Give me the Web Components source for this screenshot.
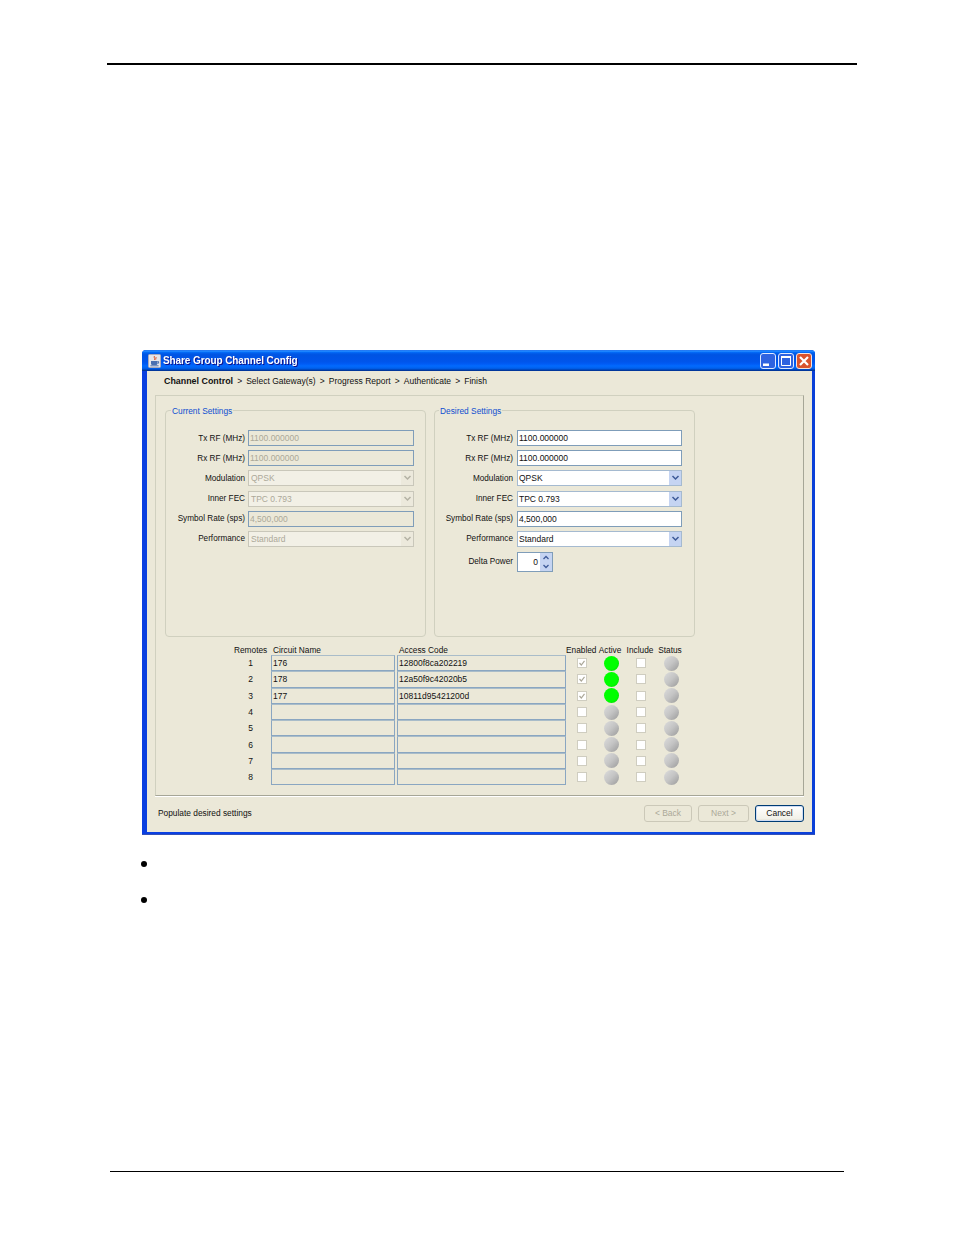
<!DOCTYPE html>
<html>
<head>
<meta charset="utf-8">
<title>Share Group Channel Config</title>
<style>
  html, body { margin: 0; padding: 0; background: #fff; }
</style>
</head>
<body>
<doc-page>
  <xp-window title="Share Group Channel Config">
    <wizard-steps></wizard-steps>
    <div slot="panel" style="display:contents">
      <settings-box legend="Current Settings" disabled style="--label-w:79px;--label-gap:3px;--field-w:166px;--legend-left:5px;"></settings-box>
      <settings-box legend="Desired Settings" delta style="--label-w:78px;--label-gap:4px;--field-w:165px;--legend-left:4px;margin-left:8px;"></settings-box>
      <remote-table></remote-table>
    </div>
  </xp-window>
</doc-page>

<script>
const UI_FONT = `"Liberation Sans", Arial, sans-serif`;

class DocPage extends HTMLElement {
  constructor() {
    super();
    this.shadow = this.attachShadow({ mode: 'open' });
  }
  connectedCallback() {
    this.shadow.innerHTML = /* html */`
    <style>
      :host { display: flex; flex-direction: column; width: 954px; height: 1235px; box-sizing: border-box; padding-top: 63px; }
      .head-rule { height: 2px; background: #000; margin-left: 107px; width: 750px; }
      .shot { margin: 285px 0 0 142px; }
      ul { list-style: none; margin: 25.5px 0 0 141px; padding: 0; display: flex; flex-direction: column; gap: 30px; }
      li { width: 6px; height: 6px; border-radius: 50%; background: #000; }
      .foot-rule { height: 1px; background: #000; margin: auto 0 63px 110px; width: 734px; }
    </style>
    <div class="head-rule"></div>
    <div class="shot"><slot></slot></div>
    <ul><li></li><li></li></ul>
    <div class="foot-rule"></div>`;
  }
}

class XpWindow extends HTMLElement {
  constructor() {
    super();
    this.shadow = this.attachShadow({ mode: 'open' });
  }
  connectedCallback() {
    this.shadow.innerHTML = /* html */`
    <style>
      /* the source screenshot is scaled down, so the text is a little soft */
      :host { display: flex; flex-direction: column; width: 673px; height: 485px; box-sizing: border-box;
        font: 8.5px ${UI_FONT}; color: #111; background: linear-gradient(90deg, #0a3fe0, #0a4ff0 60%, #0a3fd8); border-bottom: 1px solid #3350b8;
        border-radius: 4px 4px 0 0; overflow: hidden; filter: blur(.25px); }
      .title { flex: 0 0 21px; box-sizing: border-box; display: flex; align-items: center; padding: 0 3px 0 6px; color: #fff; font-weight: bold; font-size: 10px; letter-spacing: -.1px;
        text-shadow: 1px 1px 0 #0f1089;
        background: linear-gradient(#0058e6, #3a93ff 4%, #288eff 6%, #127dff 8%, #036ffc 10%, #0262ee 14%, #0057e5 20%, #0054e3 24%, #0055eb 56%, #005bf5 66%, #026afe 76%, #0062ef 86%, #0052d6 92%, #0040ab 94%, #003092 100%); }
      .title svg.app { margin-right: 2px; flex: none; }
      .title span { flex: 1; padding-bottom: 1px; }
      .ctl { display: flex; gap: 2px; }
      .ctl svg { display: block; }
      .body { flex: 1; display: flex; flex-direction: column; background: #ebe8d8; margin: 0 3px 2px 5px; min-height: 0; }
      .crumbs { flex: 0 0 24px; box-sizing: border-box; display: flex; align-items: center; padding: 0 0 5px 17px; }
      .panel { height: 401px; box-sizing: border-box; margin: 0 8px; border: 1px solid #d0d0bf; border-right-color: #a6a697; border-bottom-color: #a6a697;
        box-shadow: 0 1px 0 #fff; padding: 14px 0 0 9px; display: flex; flex-wrap: wrap; align-content: flex-start; }
      .status { flex: 1; display: flex; align-items: center; justify-content: space-between; padding: 1px 8px 3px 11px; }
      .status span { font-size: 8.35px; }
      .btns { display: flex; gap: 6px; }
      button { width: 49px; height: 17px; padding: 0; box-sizing: border-box; font: inherit; border-radius: 3px; color: #111; }
      button[disabled] { color: #aca899; border: 1px solid #cbc8b8; background: #ebe8d8; }
      button.main { background: linear-gradient(#fff, #f2f1e8 85%, #dcd8c8); border: 1px solid #003c74; box-shadow: inset 0 0 0 1px #cfdcf4; }
    </style>
    <div class="title">
      <svg class="app" width="13" height="14" viewBox="0 0 13 14">
        <rect x=".5" y=".5" width="12" height="13" rx="1" fill="#e6e6ea" stroke="#aab"/>
        <path d="M6.5 2c-1.5 1.6 1.4 2.2 0 4M8.4 3c-1 1-.2 1.6-.7 2.6" fill="none" stroke="#e0552a" stroke-width="1"/>
        <path d="M3 7h6.4v2.4c0 1-.8 1.6-1.6 1.6H4.6C3.8 11 3 10.4 3 9.4z" fill="#4a6fb0"/>
        <path d="M9.4 7.6h1.2v1.6H9.4M2.4 11.8h8.2" fill="none" stroke="#4a6fb0"/>
      </svg>
      <span>${this.getAttribute('title')}</span>
      <div class="ctl">
        <svg width="16" height="16" viewBox="0 0 16 16">
          <rect x=".5" y=".5" width="15" height="15" rx="2.5" fill="#2f63e0" stroke="#dfe9ff"/>
          <rect x="3" y="10.5" width="6" height="2.5" fill="#fff"/>
        </svg>
        <svg width="16" height="16" viewBox="0 0 16 16">
          <rect x=".5" y=".5" width="15" height="15" rx="2.5" fill="#2f63e0" stroke="#dfe9ff"/>
          <path d="M3.5 3.5h9v9h-9z" fill="none" stroke="#fff"/><path d="M3 4h10" stroke="#fff" stroke-width="2"/>
        </svg>
        <svg width="16" height="16" viewBox="0 0 16 16">
          <rect x=".5" y=".5" width="15" height="15" rx="2.5" fill="#d9532e" stroke="#f4e3dc"/>
          <path d="M4 4l8 8M12 4l-8 8" stroke="#fff" stroke-width="2.2"/>
        </svg>
      </div>
    </div>
    <div class="body">
      <div class="crumbs"><slot></slot></div>
      <div class="panel"><slot name="panel"></slot></div>
      <div class="status">
        <span>Populate desired settings</span>
        <div class="btns">
          <button disabled style="width:48px">&lt; Back</button>
          <button disabled style="width:51px">Next &gt;</button>
          <button class="main">Cancel</button>
        </div>
      </div>
    </div>`;
  }
}

class WizardSteps extends HTMLElement {
  constructor() {
    super();
    this.shadow = this.attachShadow({ mode: 'open' });
  }
  connectedCallback() {
    const steps = ['Channel Control', 'Select Gateway(s)', 'Progress Report', 'Authenticate', 'Finish'];
    this.shadow.innerHTML = /* html */`
    <style>
      :host { display: flex; align-items: center; gap: 4.1px; white-space: nowrap; }
      b { font-weight: bold; font-size: 8.9px; }
    </style>
    ${steps.map((s, i) => (i == 0 ? `<b>${s}</b>` : `<span>&gt;</span><span>${s}</span>`)).join('')}`;
  }
}

class FormField extends HTMLElement {
  constructor() {
    super();
    this.shadow = this.attachShadow({ mode: 'open' });
  }
  connectedCallback() {
    const kind = this.getAttribute('kind') || 'text';
    const value = this.getAttribute('value') || '';
    const arrow = kind == 'combo'
      ? `<i class="arrow"><svg width="9" height="8" viewBox="0 0 9 8"><path d="M1.5 2l3 3 3-3" fill="none" stroke="currentColor" stroke-width="1.5"/></svg></i>`
      : '';
    this.shadow.innerHTML = /* html */`
    <style>
      :host { display: flex; align-items: center; height: 16px; box-sizing: border-box; background: #fff; border: 1px solid #7f9db9; padding-left: 1px; color: #111; white-space: nowrap; overflow: hidden; }
      :host([disabled]) { background: #ebe8d8; color: #aca899; }
      :host([disabled][kind=combo]) { background: #f2f0e6; border-color: #c9c7ba; padding-left: 2px; }
      :host([kind=combo]) { border-color: #a5bad0; }
      span { flex: 1; }
      .arrow { flex: none; width: 12px; height: 14px; display: flex; align-items: center; justify-content: center; background: #c5d4f2; color: #3d5a98; }
      :host([disabled]) .arrow { background: #ece9dc; color: #b4b2a4; }
    </style>
    <span>${value}</span>${arrow}`;
  }
}

class SettingsBox extends HTMLElement {
  constructor() {
    super();
    this.shadow = this.attachShadow({ mode: 'open' });
  }
  connectedCallback() {
    const off = this.hasAttribute('disabled') ? 'disabled' : '';
    const rows = [
      ['Tx RF (MHz)', 'text', '1100.000000'],
      ['Rx RF (MHz)', 'text', '1100.000000'],
      ['Modulation', 'combo', 'QPSK'],
      ['Inner FEC', 'combo', 'TPC 0.793'],
      ['Symbol Rate (sps)', 'text', '4,500,000'],
      ['Performance', 'combo', 'Standard'],
    ];
    const delta = this.hasAttribute('delta') ? /* html */`
      <label class="delta">Delta Power</label>
      <div class="spin delta"><span>0</span><div class="btn">
        <svg width="9" height="9" viewBox="0 0 9 9"><path d="M2 6l2.5-2.5L7 6" fill="none" stroke="#3d5a98" stroke-width="1.3"/></svg>
        <svg width="9" height="9" viewBox="0 0 9 9"><path d="M2 3l2.5 2.5L7 3" fill="none" stroke="#3d5a98" stroke-width="1.3"/></svg>
      </div></div>` : '';
    this.shadow.innerHTML = /* html */`
    <style>
      :host { display: block; position: relative; width: 261px; height: 227px; box-sizing: border-box; border: 1px solid #d0d0bf; border-radius: 4px; padding-top: 19px; }
      .legend { position: absolute; left: var(--legend-left); top: -5px; padding: 0 1px; background: #ebe8d8; color: #0f4fd0; font-size: 8.35px; }
      .grid { display: grid; grid-template-columns: var(--label-w) var(--field-w); column-gap: var(--label-gap); row-gap: 4.2px; grid-auto-rows: 16px; align-items: center; }
      label { text-align: right; white-space: nowrap; font-size: 8.2px; }
      .spin { width: 36px; height: 20px; box-sizing: border-box; border: 1px solid #7f9db9; background: #fff; display: flex; align-items: center; justify-content: flex-end; gap: 2px; }
      .btn { width: 12px; height: 18px; background: #c5d4f2; display: flex; flex-direction: column; }
      .btn svg { display: block; width: 12px; height: 9px; }
      .delta { margin-top: 5px; }
    </style>
    <div class="legend">${this.getAttribute('legend')}</div>
    <div class="grid">
      ${rows.map(r => `<label>${r[0]}</label><form-field kind="${r[1]}" value="${r[2]}" ${off}></form-field>`).join('')}
      ${delta}
    </div>`;
  }
}

class RemoteTable extends HTMLElement {
  constructor() {
    super();
    this.shadow = this.attachShadow({ mode: 'open' });
  }
  connectedCallback() {
    const data = [['176', '12800f8ca202219'], ['178', '12a50f9c42020b5'], ['177', '10811d95421200d']];
    let rows = '';
    for (let i = 0; i < 8; i++) {
      const d = data[i] || ['', ''];
      const on = i < 3;
      rows += /* html */`
        <div class="num">${i + 1}</div>
        <div class="in">${d[0]}</div>
        <div class="in">${d[1]}</div>
        <div class="c first"><i class="box">${on ? '<svg width="8" height="8" viewBox="0 0 8 8"><path d="M1.5 4l1.8 2L6.5 1.8" fill="none" stroke="#aca899" stroke-width="1.2"/></svg>' : ''}</i></div>
        <div class="c"><i class="led ${on ? 'green' : ''}"></i></div>
        <div class="c"><i class="box"></i></div>
        <div class="c"><i class="led"></i></div>`;
    }
    this.shadow.innerHTML = /* html */`
    <style>
      :host { display: grid; flex: 0 0 auto; width: 520px; margin: 8px 0 0 69px;
        grid-template-columns: 33px 4px 124px 2px 169px 30px 30px 30px 30px; grid-template-rows: 10px; grid-auto-rows: 16.3px; align-items: center; }
      .h { white-space: nowrap; font-size: 8.3px; }
      .hc { text-align: center; padding-right: 2px; }
      .rem { padding-right: 0; }
      .num { text-align: center; grid-column: 1; }
      .in { height: 16.3px; box-sizing: border-box; border: 1px solid #8aa6c1; border-top-color: #a9bcc9; padding-left: 1px; display: flex; align-items: center; white-space: nowrap; }
      .num + .in { grid-column: 3; }
      .in + .in { grid-column: 5; }
      .c { display: flex; justify-content: center; }
      .c.first { padding-left: 1px; }
      .box { width: 10px; height: 10px; box-sizing: border-box; border: 1px solid #cfcdc0; background: #fff; display: flex; align-items: center; justify-content: center; }
      .led { width: 15px; height: 15px; border-radius: 50%; background: linear-gradient(135deg, #dcdcdc, #c4c4c4 50%, #9a9a9a); }
      .led.green { background: radial-gradient(circle at 42% 42%, #00ff00 55%, #00c800); }
    </style>
    <div class="h hc rem">Remotes</div>
    <div class="h" style="grid-column:3;padding-left:2px">Circuit Name</div>
    <div class="h" style="grid-column:5;padding-left:2px">Access Code</div>
    <div class="h hc" style="grid-column:6">Enabled</div>
    <div class="h hc">Active</div>
    <div class="h hc">Include</div>
    <div class="h hc">Status</div>
    ${rows}`;
  }
}

customElements.define('doc-page', DocPage);
customElements.define('xp-window', XpWindow);
customElements.define('wizard-steps', WizardSteps);
customElements.define('form-field', FormField);
customElements.define('settings-box', SettingsBox);
customElements.define('remote-table', RemoteTable);
</script>
</body>
</html>
